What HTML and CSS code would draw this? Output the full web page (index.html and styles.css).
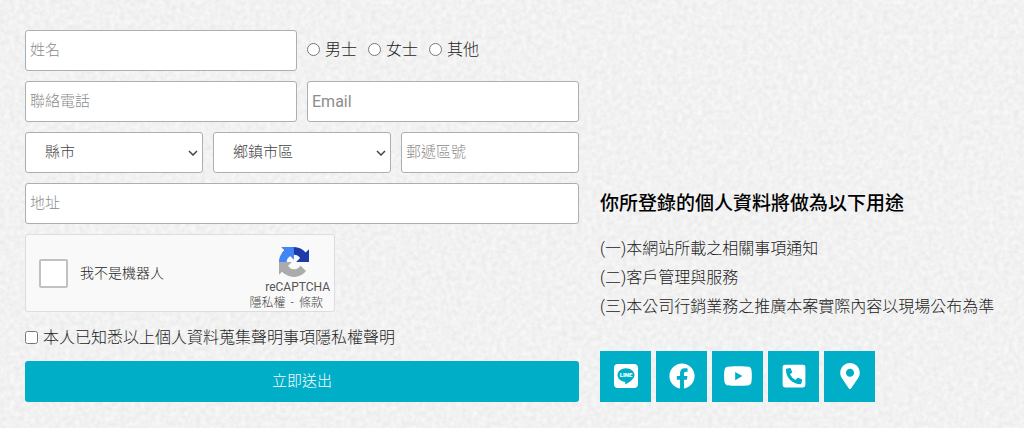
FILE: index.html
```
<!DOCTYPE html>
<html lang="zh-Hant">
<head>
<meta charset="utf-8">
<meta name="viewport" content="width=device-width, initial-scale=1">
<title>聯絡表單</title>
<link rel="stylesheet" href="styles.css">
</head>
<body>
<main class="contact">
  <form class="form">
    <div class="row row-half">
      <input class="field" type="text" aria-label="姓名" placeholder="姓名">
      <div class="radios" role="radiogroup" aria-label="稱謂">
        <label class="choice"><input type="radio" name="title">男士</label>
        <label class="choice"><input type="radio" name="title">女士</label>
        <label class="choice"><input type="radio" name="title">其他</label>
      </div>
    </div>
    <div class="row row-half">
      <input class="field" type="tel" aria-label="聯絡電話" placeholder="聯絡電話">
      <input class="field" type="email" aria-label="Email" placeholder="Email">
    </div>
    <div class="row row-third">
      <select class="field select" aria-label="縣市"><option>縣市</option></select>
      <select class="field select" aria-label="鄉鎮市區"><option>鄉鎮市區</option></select>
      <input class="field" type="text" aria-label="郵遞區號" placeholder="郵遞區號">
    </div>
    <input class="field" type="text" aria-label="地址" placeholder="地址">
    <div class="captcha">
      <label class="captcha-label"><input class="captcha-box" type="checkbox">我不是機器人</label>
      <div class="captcha-brand">
        <svg class="captcha-logo" viewBox="0 0 64 64" aria-hidden="true">
          <path fill="#1c3aa9" d="M64 31.955l-.033-1.37V4.687l-7.16 7.16C50.948 4.674 42.033.093 32.05.093c-10.4 0-19.622 4.96-25.458 12.64l11.736 11.86a15.55 15.55 0 0 1 4.754-5.334c2.05-1.6 4.952-2.906 8.968-2.906.485 0 .86.057 1.135.163 4.976.393 9.288 3.14 11.828 7.124l-8.307 8.307L64 31.953"/>
          <path fill="#4285f4" d="M31.862.094l-1.37.033H4.594l7.16 7.16C4.58 13.147 0 22.06 0 32.046c0 10.4 4.96 19.622 12.64 25.458L24.5 45.768a15.55 15.55 0 0 1-5.334-4.754c-1.6-2.05-2.906-4.952-2.906-8.968 0-.485.057-.86.163-1.135.393-4.976 3.14-9.288 7.124-11.828l8.307 8.307L31.86.095"/>
          <path fill="#ababab" d="M.001 32.045l.033 1.37v25.898l7.16-7.16c5.86 7.173 14.774 11.754 24.76 11.754 10.4 0 19.622-4.96 25.458-12.64l-11.736-11.86a15.55 15.55 0 0 1-4.754 5.334c-2.05 1.6-4.952 2.906-8.968 2.906-.485 0-.86-.057-1.135-.163-4.976-.393-9.288-3.14-11.828-7.124l8.307-8.307c-10.522.04-22.4.066-27.295-.005"/>
        </svg>
        <span class="captcha-name">reCAPTCHA</span>
        <span class="captcha-links"><a href="#privacy">隱私權</a><span>-</span><a href="#terms">條款</a></span>
      </div>
    </div>
    <label class="consent"><input type="checkbox">本人已知悉以上個人資料蒐集聲明事項隱私權聲明</label>
    <button class="submit" type="submit">立即送出</button>
  </form>

  <aside class="info">
    <h2 class="info-title">你所登錄的個人資料將做為以下用途</h2>
    <p class="info-text">(一)本網站所載之相關事項通知</p>
    <p class="info-text">(二)客戶管理與服務</p>
    <p class="info-text">(三)本公司行銷業務之推廣本案實際內容以現場公布為準</p>
    <nav class="social" aria-label="社群連結">
      <a class="social-link" href="#line" aria-label="LINE">
        <svg class="icon" viewBox="0 0 26 26">
          <rect x="1" y="1" width="24" height="24" rx="4" fill="#fff"/>
          <path fill="#00aec7" d="M13 5.200c-4.700 0-8.500 3-8.500 6.800 0 3.400 3 6.200 7.100 6.700.9.200.7.800.5 2.200-.1.500.2.500.6.300 3.100-1.600 8.800-5 8.800-9.200 0-3.800-3.800-6.800-8.500-6.800z"/>
          <text class="line-word" x="13" y="14" text-anchor="middle">LINE</text>
        </svg>
      </a>
      <a class="social-link" href="#facebook" aria-label="Facebook">
        <svg class="icon" viewBox="0 0 512 512"><path fill="#fff" d="M504 256C504 119 393 8 256 8S8 119 8 256c0 123.780 90.690 226.380 209.250 245V327.690h-63V256h63v-54.640c0-62.150 37-96.480 93.670-96.480 27.140 0 55.520 4.840 55.520 4.840v61h-31.280c-30.800 0-40.410 19.120-40.410 38.730V256h68.780l-11 71.690h-57.780V501C413.310 482.380 504 379.780 504 256z"/></svg>
      </a>
      <a class="social-link" href="#youtube" aria-label="YouTube">
        <svg class="icon icon-wide" viewBox="0 0 576 512"><path fill="#fff" d="M549.655 124.083c-6.281-23.650-24.787-42.276-48.284-48.597C458.781 64 288 64 288 64S117.220 64 74.629 75.486c-23.497 6.322-42.003 24.947-48.284 48.597-11.412 42.867-11.412 132.305-11.412 132.305s0 89.438 11.412 132.305c6.281 23.650 24.787 41.500 48.284 47.821C117.220 448 288 448 288 448s170.780 0 213.371-11.486c23.497-6.321 42.003-24.171 48.284-47.821 11.412-42.867 11.412-132.305 11.412-132.305s0-89.438-11.412-132.305zm-317.510 213.508V175.185l142.739 81.205-142.739 81.201z"/></svg>
      </a>
      <a class="social-link" href="#phone" aria-label="電話">
        <svg class="icon" viewBox="0 0 448 512"><path fill="#fff" d="M400 32H48A48 48 0 0 0 0 80v352a48 48 0 0 0 48 48h352a48 48 0 0 0 48-48V80a48 48 0 0 0-48-48zm-16.390 307.370l-15 65A15 15 0 0 1 354 416C194 416 64 286.290 64 126a15.700 15.700 0 0 1 11.630-14.610l65-15A18.230 18.230 0 0 1 144 96a16.270 16.270 0 0 1 13.790 9.090l30 70A17.900 17.900 0 0 1 189 181a17 17 0 0 1-5.500 11.610l-37.890 31a231.910 231.910 0 0 0 110.780 110.780l31-37.890A17 17 0 0 1 299 291a17.850 17.850 0 0 1 5.910 1.210l70 30A16.250 16.250 0 0 1 384 336a17.410 17.410 0 0 1-.39 3.370z"/></svg>
      </a>
      <a class="social-link" href="#map" aria-label="地圖">
        <svg class="icon" viewBox="0 0 384 512"><path fill="#fff" d="M172.268 501.670C26.970 291.031 0 269.413 0 192 0 85.961 85.961 0 192 0s192 85.961 192 192c0 77.413-26.970 99.031-172.268 309.670-9.535 13.774-29.930 13.773-39.464 0zM192 272c44.183 0 80-35.817 80-80s-35.817-80-80-80-80 35.817-80 80 35.817 80 80 80z"/></svg>
      </a>
    </nav>
  </aside>
</main>
</body>
</html>
```
FILE: styles.css
```
* {
  box-sizing: border-box;
}

body {
  margin: 0;
  min-height: 100vh;
  color: #1c1c1c;
  background-color: #f1f1f1;
  /* paper grain */
  background-image: url("data:image/svg+xml,%3Csvg xmlns='http://www.w3.org/2000/svg' width='512' height='512'%3E%3Cfilter id='p' x='0' y='0' width='100%25' height='100%25' color-interpolation-filters='sRGB'%3E%3CfeTurbulence type='fractalNoise' baseFrequency='.2' numOctaves='3' seed='4' stitchTiles='stitch'/%3E%3CfeColorMatrix values='.08 0 0 0 .907 .08 0 0 0 .907 .08 0 0 0 .907 0 0 0 0 1' /%3E%3C/filter%3E%3Crect width='512' height='512' filter='url(%23p)'/%3E%3C/svg%3E");
  font: 300 16px/29px Roboto, "Noto Sans CJK TC", sans-serif;
}

input,
select,
button {
  font-family: inherit;
  font-weight: inherit;
}

.contact {
  display: grid;
  grid-template-columns: 554fr 409fr;
  gap: 21px;
  padding: 30px 15px 26px 25px;
}

.form {
  display: flex;
  flex-direction: column;
  gap: 10px;
  min-width: 0;
}

.row {
  display: grid;
  gap: 10px;
}

.row-half {
  grid-template-columns: repeat(2, minmax(0, 1fr));
}

.row-third {
  grid-template-columns: repeat(3, minmax(0, 1fr));
}

.field {
  width: 100%;
  height: 41px;
  padding: 0 4px 2px;
  border: 1px solid #a9b0b5;
  border-radius: 3px;
  background-color: #fff;
  color: #444;
  font-size: 15px;
}

.field::placeholder {
  color: #8c8c8c;
  opacity: 1;
}

.field[type="email"] {
  padding: 0 4px;
  font-size: 16px;
  font-weight: 400;
}

.select {
  appearance: none;
  padding: 0 20px 2px 19px;
  background-image: url("data:image/svg+xml,%3Csvg xmlns='http://www.w3.org/2000/svg' width='10' height='6'%3E%3Cpath d='M1 1l4 4 4-4' fill='none' stroke='%23444' stroke-width='1.500'/%3E%3C/svg%3E");
  background-repeat: no-repeat;
  background-position: right 4px center;
}

.radios {
  display: flex;
  align-items: center;
  gap: 11px;
  padding-bottom: 2px;
}

.choice,
.consent {
  display: flex;
  align-items: center;
  gap: 5px;
}

.choice input,
.consent input {
  flex: none;
  width: 13px;
  height: 13px;
  margin: 0;
}

.consent {
  height: 29px;
  padding-top: 2px;
}

.captcha {
  display: flex;
  justify-content: space-between;
  width: 310px;
  max-width: 100%;
  height: 78px;
  padding: 0 4px 0 13px;
  border: 1px solid #ddd;
  border-radius: 3px;
  background: #f9f9f9;
}

.captcha-label {
  display: flex;
  align-items: center;
  gap: 12px;
  font-size: 14px;
}

.captcha-box {
  flex: none;
  appearance: none;
  width: 29px;
  height: 29px;
  margin: 0;
  border: 2px solid #c1c1c1;
  border-radius: 2px;
  background: #fff;
}

.captcha-brand {
  display: flex;
  flex-direction: column;
  align-items: flex-end;
  padding-top: 12px;
  font-size: 12px;
  line-height: 16px;
  color: #444;
}

.captcha-logo {
  width: 32px;
  height: 32px;
  margin-right: 20px;
}

.captcha-name {
  margin-top: 2px;
  color: #555;
  font-weight: 400;
}

.captcha-links {
  display: flex;
  gap: 5px;
  padding-right: 7px;
}

.captcha-links a {
  color: inherit;
  text-decoration: none;
}

.submit {
  height: 41px;
  padding: 0 0 4px;
  border: 0;
  border-radius: 3px;
  background: #00aec7;
  color: #fff;
  font-size: 15px;
}

.info {
  align-self: end;
}

.info-title {
  margin: 0 0 15px;
  color: #000;
  font-size: 19px;
  font-weight: 500;
  line-height: 30px;
}

.info-text {
  margin: 0;
}

.social {
  display: flex;
  flex-wrap: wrap;
  gap: 5px;
  margin-top: 30px;
}

.social-link {
  display: grid;
  place-items: center;
  width: 51px;
  height: 51px;
  padding-bottom: 2px;
  background: #00aec7;
}

.icon {
  width: 26px;
  height: 26px;
}

.icon-wide {
  width: 30px;
}

.line-word {
  fill: #fff;
  font: 900 6px Roboto, sans-serif;
}
```
